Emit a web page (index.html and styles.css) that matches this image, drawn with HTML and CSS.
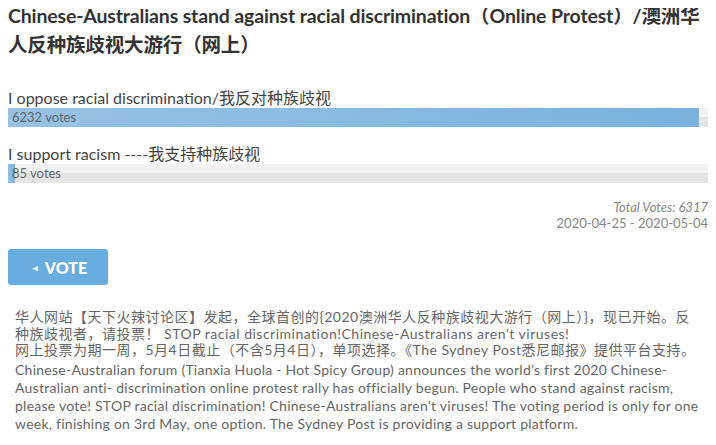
FILE: index.html
```html
<!DOCTYPE html>
<html lang="zh">
<head>
<meta charset="utf-8">
<title>Poll</title>
<link rel="stylesheet" href="styles.css">
</head>
<body>
<h2 class="title">Chinese-Australians stand against racial discrimination（Online Protest）/澳洲华人反种族歧视大游行（网上）</h2>
<div class="poll">
  <div class="option">
    <div class="label">I oppose racial discrimination/我反对种族歧视</div>
    <div class="track">
      <div class="fill" style="width:98.65%"></div>
      <span class="count">6232 votes</span>
    </div>
  </div>
  <div class="option">
    <div class="label">I support racism ----我支持种族歧视</div>
    <div class="track">
      <div class="fill" style="width:1.0%"></div>
      <span class="count">85 votes</span>
    </div>
  </div>
  <div class="totals">
    <div class="total">Total Votes: 6317</div>
    <div class="dates">2020-04-25 - 2020-05-04</div>
  </div>
  <button class="vote" type="button"><span class="arrow">◂</span>VOTE</button>
</div>
<div class="desc">
  <div class="desc-zh">华人网站【天下火辣讨论区】发起，全球首创的{2020澳洲华人反种族歧视大游行（网上）}，现已开始。反种族歧视者，请投票！ STOP racial discrimination!Chinese-Australians aren’t viruses!<br>网上投票为期一周，5月4日截止（不含5月4日），单项选择。《The Sydney Post悉尼邮报》提供平台支持。</div>
  <div class="desc-en">Chinese-Australian forum (Tianxia Huola - Hot Spicy Group) announces the world’s first 2020 Chinese-Australian anti- discrimination online protest rally has officially begun. People who stand against racism, please vote! STOP racial discrimination! Chinese-Australians aren’t viruses! The voting period is only for one week, finishing on 3rd May, one option. The Sydney Post is providing a support platform.</div>
</div>
</body>
</html>
```
FILE: styles.css
```css
html, body {
  background: #fff;
}
body {
  margin: 8px;
  font-family: Lato, "Noto Sans CJK SC", sans-serif;
  color: #444;
}
.title {
  margin: -8px 0 0 0;
  padding-top: 1px;
  font-size: 19.5px;
  letter-spacing: -0.15px;
  line-height: 29px;
  font-weight: 700;
  color: #333;
}
.poll {
  display: flex;
  flex-direction: column;
  padding-top: 29px;
}
.option {
  display: flex;
  flex-direction: column;
  margin-bottom: 17px;
}
.label {
  font-size: 16px;
  line-height: 20px;
  color: #444;
}
.track {
  display: grid;
  height: 19px;
  background: linear-gradient(#f3f3f3, #f3f3f3 45%, #e4e4e4 50%, #e6e6e6);
}
.fill, .count {
  grid-area: 1 / 1;
}
.fill {
  height: 19px;
  background: linear-gradient(90deg, #97c2e5, #7ab2dd);
}
.count {
  align-self: center;
  padding-left: 4px;
  font-size: 13px;
  line-height: 19px;
  color: #666;
}
.totals {
  margin-top: -1px;
  text-align: right;
  font-size: 13px;
  line-height: 16px;
  color: #888;
}
.total {
  font-style: italic;
}
.vote {
  align-self: flex-start;
  margin-top: 18px;
  width: 100px;
  height: 36px;
  border: none;
  border-radius: 3px;
  background: #68ace0;
  color: #fff;
  font-family: Lato, sans-serif;
  font-weight: 900;
  font-size: 16px;
  display: flex;
  align-items: center;
  justify-content: center;
  gap: 7px;
  padding: 0 0 0 4px;
}
.arrow {
  font-size: 9px;
}
.desc {
  margin-top: 24px;
  padding: 0 4px 0 7px;
  font-size: 14px;
  color: #666;
}
.desc-zh {
  line-height: 16.5px;
  letter-spacing: 0.5px;
}
.desc-en {
  margin-top: 2px;
  line-height: 18px;
  letter-spacing: 0.25px;
}
```
